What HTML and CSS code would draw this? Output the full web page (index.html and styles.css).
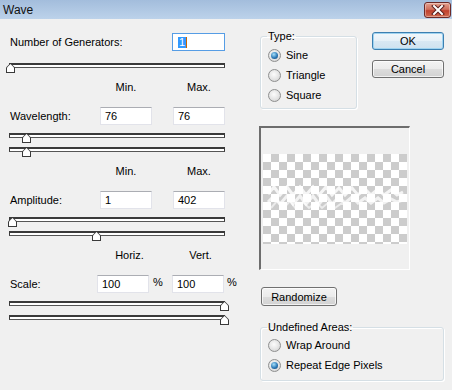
FILE: index.html
```html
<!DOCTYPE html>
<html lang="en">
<head>
  <meta charset="UTF-8" />
  <title>Wave</title>
  <link rel="stylesheet" href="styles.css">
</head>
<body>
  <div class="window">
    <div class="titlebar">
      <span class="title">Wave</span>
      <span class="close">
        <svg width="16" height="10" viewBox="0 0 16 10">
          <path d="M4 1 L12 9 M12 1 L4 9" stroke="#5a2020" stroke-width="4" stroke-linecap="square"/>
          <path d="M4 1 L12 9 M12 1 L4 9" stroke="#fff" stroke-width="2" stroke-linecap="square"/>
        </svg>
      </span>
    </div>

    <div class="dialog">
      <div class="params">
        <div class="row gen">
          <span class="label">Number of Generators:</span>
          <span class="field focus"><span class="sel">1</span><span class="caret"></span></span>
        </div>
        <div class="slider first"><div class="track"></div><span class="thumb" style="left:-3px"></span></div>

        <div class="heads"><span>Min.</span><span>Max.</span></div>
        <div class="row">
          <span class="label">Wavelength:</span>
          <span class="field">76</span>
          <span class="field">76</span>
        </div>
        <div class="slider"><div class="track"></div><span class="thumb" style="left:13px"></span></div>
        <div class="slider"><div class="track"></div><span class="thumb" style="left:13px"></span></div>

        <div class="heads"><span>Min.</span><span>Max.</span></div>
        <div class="row">
          <span class="label">Amplitude:</span>
          <span class="field">1</span>
          <span class="field">402</span>
        </div>
        <div class="slider"><div class="track"></div><span class="thumb" style="left:-1px"></span></div>
        <div class="slider"><div class="track"></div><span class="thumb" style="left:83px"></span></div>

        <div class="heads scale"><span>Horiz.</span><span>Vert.</span></div>
        <div class="row scale">
          <span class="label">Scale:</span>
          <span class="field">100</span><span class="pct">%</span>
          <span class="field">100</span><span class="pct last">%</span>
        </div>
        <div class="slider"><div class="track"></div><span class="thumb" style="left:211px"></span></div>
        <div class="slider"><div class="track"></div><span class="thumb" style="left:211px"></span></div>
      </div>

      <div class="side">
        <div class="top">
          <fieldset class="group type">
            <legend>Type:</legend>
            <div class="opt"><span class="radio on"></span>Sine</div>
            <div class="opt"><span class="radio"></span>Triangle</div>
            <div class="opt"><span class="radio"></span>Square</div>
          </fieldset>
          <div class="buttons">
            <button class="btn default">OK</button>
            <button class="btn">Cancel</button>
          </div>
        </div>

        <div class="preview">
          <div class="checker">
            <svg width="144" height="90" viewBox="0 0 144 90">
              <polyline points="5,40 11,33 17,41 24,33 30,41 37,33 43,41 50,33 56,41 63,33 69,41 76,34 82,41 89,34 95,41 102,35 108,41 115,35 121,41 128,36 134,41 140,38"
                fill="none" stroke="#fff" stroke-width="3" opacity="0.8"/>
              <polyline points="5,48 11,42 17,50 24,42 30,50 37,42 43,50 50,42 56,50 63,42 69,50 76,43 82,49 89,43 95,49 102,44 108,49 115,44 121,49 128,45 134,48 140,46"
                fill="none" stroke="#fff" stroke-width="3" opacity="0.75"/>
              <polyline points="8,54 14,47 20,55 27,47 33,55 40,48 46,54 53,48 59,54 66,48 72,54 79,49 85,53"
                fill="none" stroke="#fff" stroke-width="2" opacity="0.6"/>
            </svg>
          </div>
        </div>

        <button class="btn random">Randomize</button>

        <fieldset class="group undef">
          <legend>Undefined Areas:</legend>
          <div class="opt"><span class="radio"></span>Wrap Around</div>
          <div class="opt"><span class="radio on"></span>Repeat Edge Pixels</div>
        </fieldset>
      </div>
    </div>
  </div>
</body>
</html>
```

FILE: styles.css
```css
* { box-sizing: border-box; }
html, body {
  margin: 0;
  padding: 0;
  background: #f0f0f0;
  font-family: "Liberation Sans", Arial, sans-serif;
  font-size: 11px;
  color: #000;
}
.window {
  width: 452px;
  height: 390px;
  background: #f0f0f0;
  overflow: hidden;
}
.titlebar {
  height: 19px;
  display: flex;
  align-items: center;
  justify-content: space-between;
  padding: 0 1px 0 3px;
  background: linear-gradient(#a3bddc, #bcd2ea);
}
.title {
  font-size: 12px;
  color: #111;
}
.close {
  width: 27px;
  height: 16px;
  margin-top: 1px;
  display: flex;
  align-items: center;
  justify-content: center;
  border: 1px solid #6c2a28;
  border-radius: 3px;
  background: linear-gradient(#e4a08f 0%, #cf6f5c 45%, #c0412e 55%, #d06a4f 100%);
  box-shadow: inset 0 0 0 1px rgba(255, 255, 255, 0.35);
}

.dialog {
  display: flex;
}
.params {
  width: 216px;
  flex: none;
  margin-left: 9px;
  padding-top: 14px;
}
.row {
  display: flex;
  align-items: center;
  height: 18px;
  margin-top: 13px;
}
.row > * { flex: none; }
.row.gen { margin-top: 0; justify-content: space-between; }
.label {
  width: 91px;
  padding-left: 1px;
}
.gen .label { width: auto; }
.row.scale .label { width: 88px; }
.field {
  width: 52px;
  height: 18px;
  padding: 2px 4px;
  background: #fff;
  border: 1px solid #e2e3ea;
  border-top-color: #abadb3;
  line-height: 13px;
}
.field + .field { margin-left: 21px; }
.field.focus {
  width: 53px;
  border-color: #569de5;
  display: flex;
  align-items: center;
  padding-left: 5px;
}
.sel {
  background: #3399ff;
  color: #fff;
  padding: 0 1px;
  line-height: 11px;
}
.caret {
  width: 1px;
  height: 11px;
  background: #c86400;
}
.pct {
  width: 23px;
  padding-left: 4px;
  align-self: flex-start;
  margin-top: 1px;
}
.pct.last { width: 12px; padding-left: 3px; }

.heads {
  display: flex;
  gap: 21px;
  height: 13px;
  line-height: 13px;
  margin-top: 8px;
  padding-left: 91px;
}
.heads span {
  width: 52px;
  text-align: center;
}
.heads.scale {
  padding-left: 96px;
  gap: 22px;
}

.slider {
  position: relative;
  height: 10px;
  margin-top: 8px;
}
.slider.first { margin-top: 12px; }
.slider + .slider { margin-top: 4px; }
.track {
  height: 5px;
  background: #fff;
  border: 1px solid #3a3a3a;
  border-top-width: 2px;
  border-bottom-color: #555;
}
.thumb {
  position: absolute;
  top: 0;
  width: 9px;
  height: 10px;
  background: #3a3a3a;
  clip-path: polygon(50% 0, 100% 45%, 100% 100%, 0 100%, 0 45%);
}
.thumb::after {
  content: "";
  position: absolute;
  left: 1px;
  top: 1px;
  right: 1px;
  bottom: 1px;
  background: #fff;
  clip-path: polygon(50% 0, 100% 45%, 100% 100%, 0 100%, 0 45%);
}

.side {
  width: 185px;
  flex: none;
  margin-left: 34px;
}
.top {
  display: flex;
  align-items: flex-start;
}
.group {
  margin: 0;
  border: 1px solid #d5dfe5;
  border-radius: 3px;
  box-shadow: inset 1px 1px 0 #fff, 1px 1px 0 #fff;
  padding: 2px 4px 3px 7px;
  min-width: 0;
}
.group legend {
  padding: 0 1px;
  margin-left: -1px;
  line-height: 13px;
}
.type {
  width: 97px;
  margin: 11px 0 0 1px;
}
.opt {
  height: 20px;
  display: flex;
  align-items: center;
  gap: 5px;
}
.radio {
  position: relative;
  width: 13px;
  height: 13px;
  border-radius: 50%;
  border: 1px solid #8e8f8f;
  background: radial-gradient(circle at 45% 40%, #fcfcfc, #e4e4e4 55%, #c8c8c8);
}
.radio.on::after {
  content: "";
  position: absolute;
  left: 2px;
  top: 2px;
  width: 7px;
  height: 7px;
  border-radius: 50%;
  background: radial-gradient(circle at 40% 35%, #a6e0fa, #2d7ab8 55%, #0e3a66);
}

.buttons {
  display: flex;
  flex-direction: column;
  gap: 10px;
  margin: 13px 0 0 15px;
}
.btn {
  height: 18px;
  padding: 0;
  border: 1px solid #707070;
  border-radius: 3px;
  background: linear-gradient(#f3f3f3 0%, #ebebeb 50%, #dddddd 50%, #d2d2d2 100%);
  box-shadow: inset 0 0 0 1px rgba(255, 255, 255, 0.7);
  font-family: inherit;
  font-size: 11px;
  color: #000;
}
.buttons .btn { width: 72px; }
.btn.default {
  border-color: #3c7fb1;
  background: linear-gradient(#f1f7fb 0%, #e6f0f7 50%, #d9e8f3 50%, #cfe2ef 100%);
  box-shadow: inset 0 0 0 1px #9fd3f0;
}

.preview {
  width: 151px;
  height: 144px;
  margin-top: 17px;
  display: flex;
  align-items: center;
  justify-content: center;
  border: 1px solid #fff;
  border-top: 2px solid #6d6d6d;
  border-left: 2px solid #6d6d6d;
  padding-top: 1px;
}
.checker {
  width: 144px;
  height: 90px;
  background-color: #fff;
  background-image:
    linear-gradient(45deg, #cccccc 25%, transparent 25%, transparent 75%, #cccccc 75%),
    linear-gradient(45deg, #cccccc 25%, transparent 25%, transparent 75%, #cccccc 75%);
  background-size: 16px 16px;
  background-position: 0 0, 8px 8px;
}
.checker svg { display: block; }

.btn.random {
  display: block;
  width: 76px;
  height: 19px;
  margin: 17px 0 0 2px;
}
.undef {
  width: 184px;
  margin: 15px 0 0 1px;
  padding-top: 1px;
  padding-bottom: 5px;
}
```
